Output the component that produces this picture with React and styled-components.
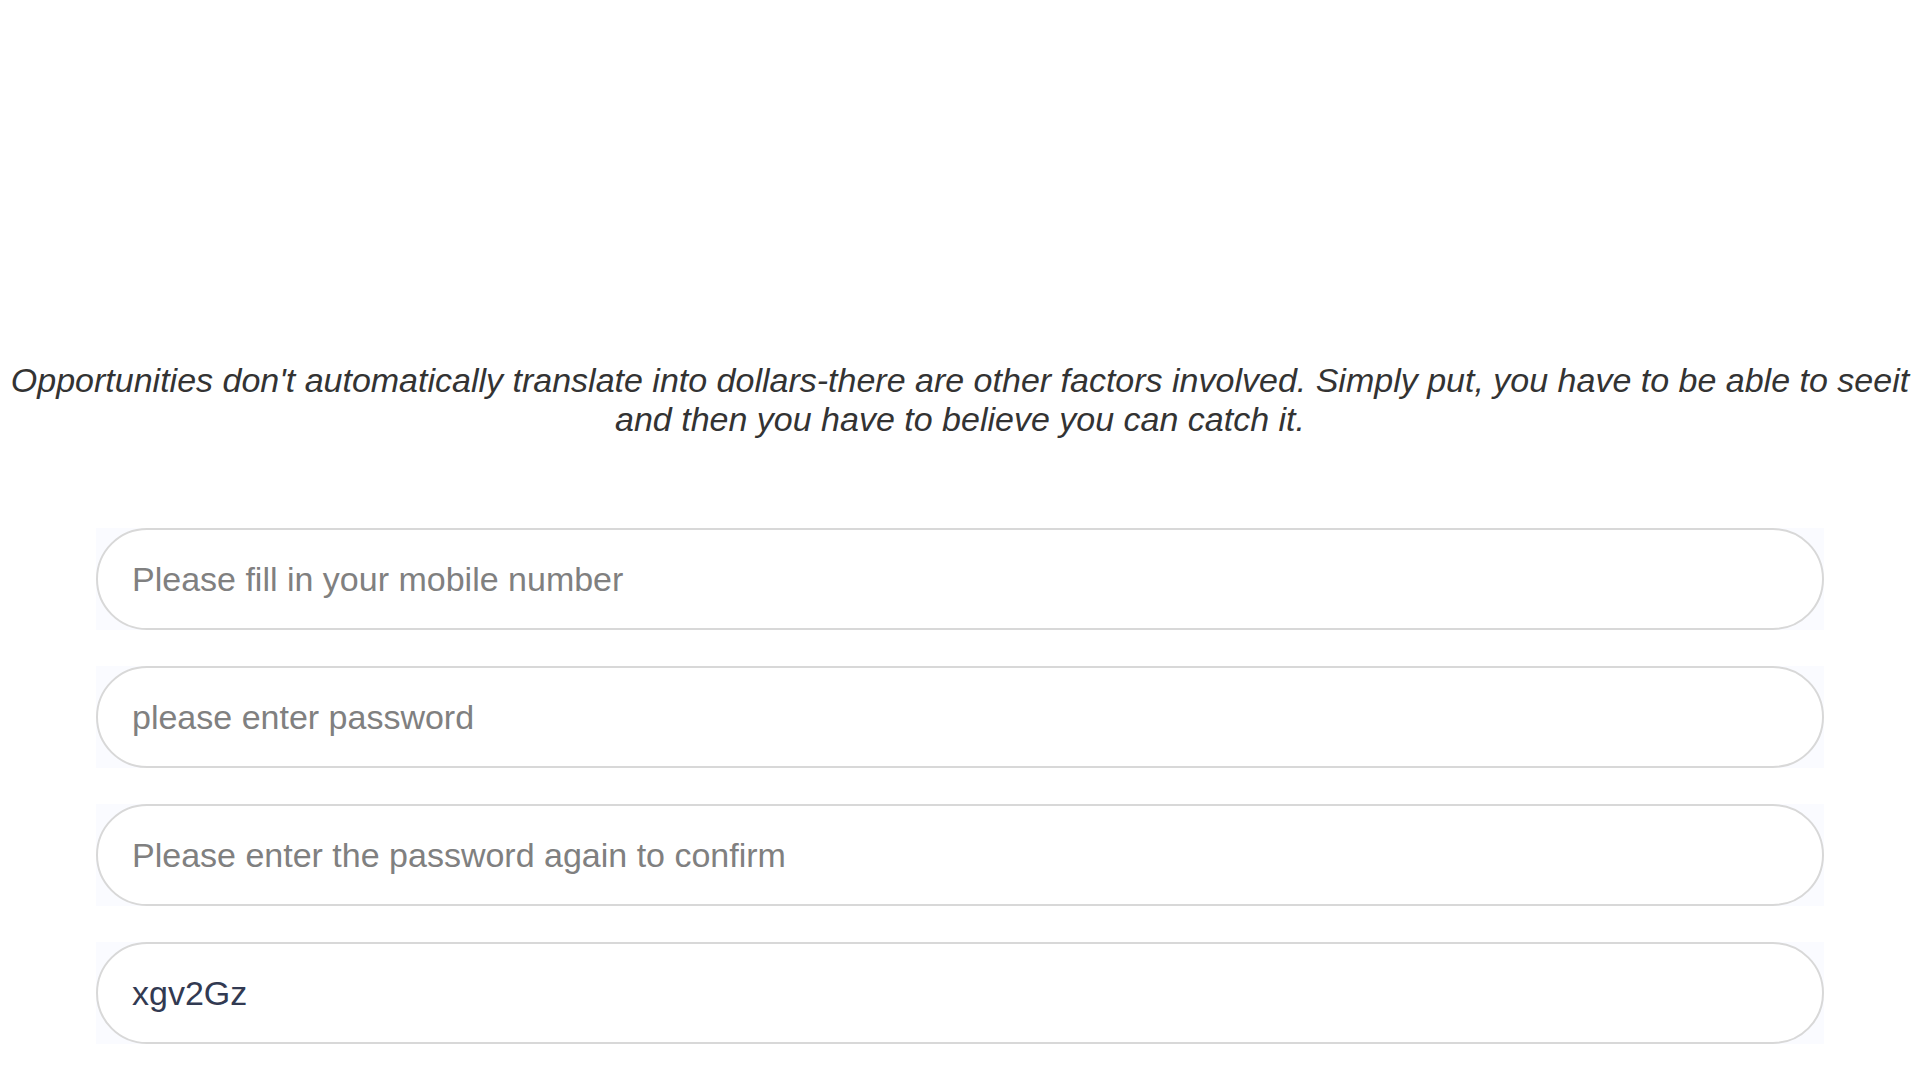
import styled, { createGlobalStyle } from "styled-components";

const GlobalStyle = createGlobalStyle`
    body{
        margin: 0;
        background: #ffffff;
        font-family: "Liberation Sans", Arial, sans-serif;
    }
`

const fields = [
    { placeholder: "Please fill in your mobile number", type: "tel" },
    { placeholder: "please enter password", type: "password" },
    { placeholder: "Please enter the password again to confirm", type: "password" },
    { value: "xgv2Gz", type: "text" },
]

export default function App(){
    return(
        <Page>
        <GlobalStyle/>
        <Quote>
            Opportunities don't automatically translate into dollars-there are other factors involved. Simply put, you have to be able to seeit and then you have to believe you can catch it.
        </Quote>
        <Form>
            {fields.map((f, i) => (
                <Field key={i}>
                    <Input type={f.type} placeholder={f.placeholder} defaultValue={f.value}/>
                </Field>
            ))}
        </Form>
        </Page>
    )
}

const Page = styled.div`
    display: flex;
    flex-direction: column;
    align-items: center;
    padding-top: 361px;
    min-height: 100vh;
    box-sizing: border-box;
`

const Quote = styled.p`
    margin: 0 0 89px;
    padding: 0 8px;
    font-size: 34px;
    line-height: 39px;
    font-style: italic;
    color: #333333;
    text-align: center;
`

const Form = styled.div`
    width: 90%;
    display: flex;
    flex-direction: column;
    gap: 36px;
`

const Field = styled.div`
    background: #fafbff;
`

const Input = styled.input`
    display: block;
    width: 100%;
    height: 102px;
    box-sizing: border-box;
    border: 2px solid #d8d8d8;
    border-radius: 51px;
    background: #ffffff;
    padding: 0 34px;
    font-family: "Liberation Sans", Arial, sans-serif;
    font-size: 34px;
    color: #323a52;
    outline: none;
    &::placeholder{
        color: #808080;
    }
`
